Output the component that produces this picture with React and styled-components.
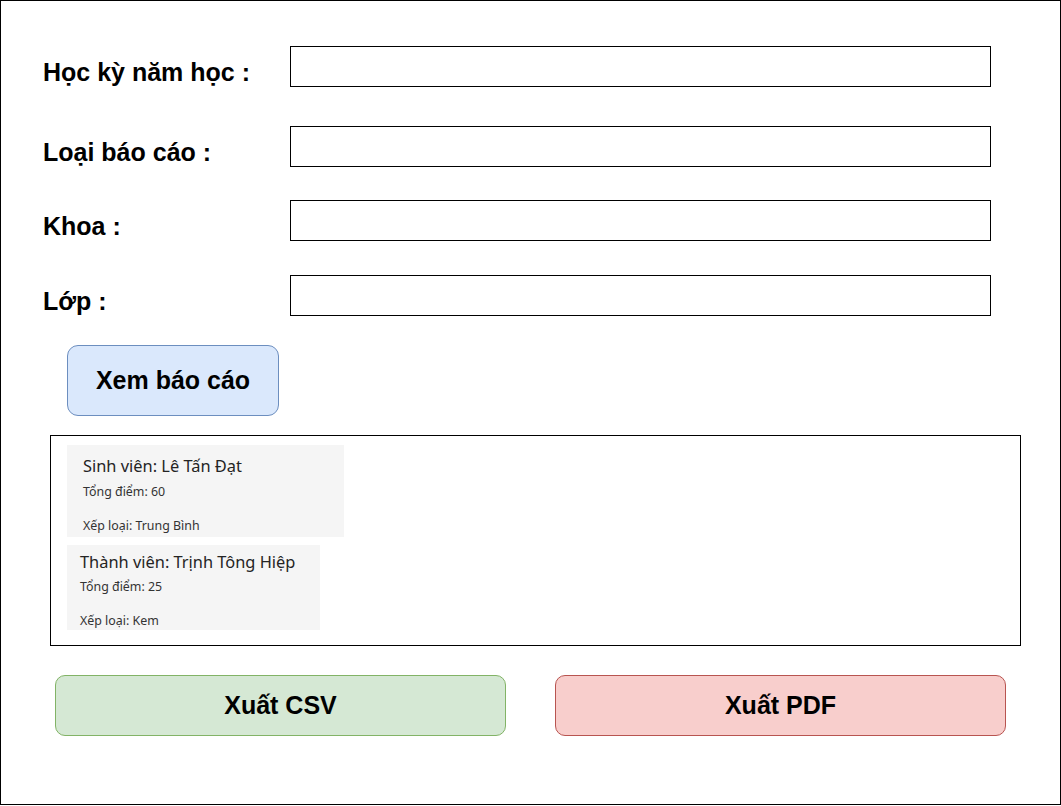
import React from 'react';
import styled, { createGlobalStyle } from 'styled-components';

const GlobalStyle = createGlobalStyle`
  html, body {
    margin: 0;
    padding: 0;
    background: #ffffff;
  }
  body {
    font-family: "Liberation Sans", Arial, sans-serif;
  }
`;

const Frame = styled.div`
  width: 1061px;
  height: 805px;
  box-sizing: border-box;
  border: 1px solid #000;
  display: flex;
  flex-direction: column;
`;

const Form = styled.div`
  display: flex;
  flex-direction: column;
  margin-top: 45px;
  padding-left: 42px;
`;

const Row = styled.div`
  display: flex;
  align-items: flex-start;
  margin-top: ${(p) => p.$gap || 0}px;
`;

const Label = styled.label`
  width: 247px;
  height: 41px;
  box-sizing: border-box;
  padding-top: 11px;
  display: flex;
  align-items: center;
  font-size: 25px;
  font-weight: 700;
  color: #000;
`;

const Field = styled.input`
  width: 701px;
  height: 41px;
  box-sizing: border-box;
  border: 1px solid #000;
  border-radius: 0;
  margin: 0;
  padding: 0 8px;
  background: #fff;
  font-family: inherit;
  font-size: 16px;
  outline: none;
`;

const ViewButton = styled.button`
  align-self: flex-start;
  width: 212px;
  height: 71px;
  margin: 29px 0 0 66px;
  box-sizing: border-box;
  border: 1px solid #6c8ebf;
  border-radius: 11px;
  background: #dae8fc;
  font-family: "Liberation Sans", Arial, sans-serif;
  font-size: 25px;
  font-weight: 700;
  color: #000;
  padding: 0;
  cursor: pointer;
`;

const Results = styled.div`
  width: 971px;
  height: 211px;
  margin: 19px 0 0 49px;
  box-sizing: border-box;
  border: 1px solid #000;
  padding: 9px 0 0 16px;
  display: flex;
  flex-direction: column;
  align-items: flex-start;
  gap: 8px;
`;

const Card = styled.div`
  width: ${(p) => p.$width}px;
  box-sizing: border-box;
  background: #f5f5f5;
  padding: ${(p) => (p.$compact ? '6px 0 0 13px' : '10px 0 2px 16px')};
  font-family: "Segoe UI", "Noto Sans", "Open Sans", sans-serif;
  color: #333;
`;

const CardTitle = styled.div`
  font-size: 16.4px;
  line-height: 22px;
  color: #242424;
`;

const CardLine = styled.div`
  font-size: 12.4px;
  line-height: 18px;
  color: #333;
  margin-top: ${(p) => p.$gap}px;
`;

const Exports = styled.div`
  display: flex;
  gap: 49px;
  margin: 29px 0 0 54px;
`;

const ExportButton = styled.button`
  width: 451px;
  height: 61px;
  box-sizing: border-box;
  border: 1px solid ${(p) => p.$stroke};
  border-radius: 10px;
  background: ${(p) => p.$fill};
  font-family: "Liberation Sans", Arial, sans-serif;
  font-size: 25px;
  font-weight: 700;
  color: #000;
  padding: 0;
  cursor: pointer;
`;

const fields = [
  { label: 'Học kỳ năm học :', gap: 0 },
  { label: 'Loại báo cáo :', gap: 39 },
  { label: 'Khoa :', gap: 33 },
  { label: 'Lớp :', gap: 34 },
];

const students = [
  { title: 'Sinh viên: Lê Tấn Đạt', score: 60, rank: 'Trung Bình', width: 277 },
  { title: 'Thành viên: Trịnh Tông Hiệp', score: 25, rank: 'Kem', width: 253, compact: true },
];

const App = () => {
  return (
    <>
      <GlobalStyle />
      <Frame>
        <Form>
          {fields.map((f) => (
            <Row key={f.label} $gap={f.gap}>
              <Label>{f.label}</Label>
              <Field type="text" />
            </Row>
          ))}
        </Form>

        <ViewButton>Xem báo cáo</ViewButton>

        <Results>
          {students.map((s) => (
            <Card key={s.title} $width={s.width} $compact={s.compact}>
              <CardTitle>{s.title}</CardTitle>
              <CardLine $gap={s.compact ? 5 : 6}>Tổng điểm: {s.score}</CardLine>
              <CardLine $gap={16}>Xếp loại: {s.rank}</CardLine>
            </Card>
          ))}
        </Results>

        <Exports>
          <ExportButton $fill="#d5e8d4" $stroke="#82b366">Xuất CSV</ExportButton>
          <ExportButton $fill="#f8cecc" $stroke="#b85450">Xuất PDF</ExportButton>
        </Exports>
      </Frame>
    </>
  );
};

export default App;
